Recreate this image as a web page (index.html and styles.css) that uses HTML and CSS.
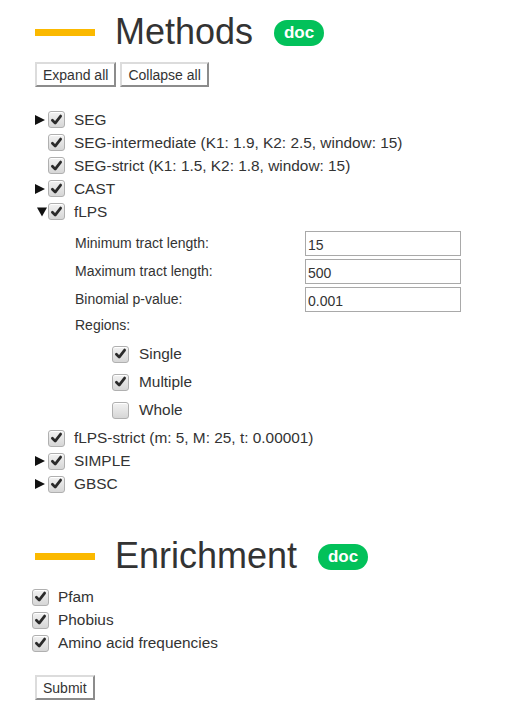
FILE: index.html
```html
<!DOCTYPE html>
<html lang="en">
<head>
<meta charset="utf-8">
<title>Methods</title>
<link rel="stylesheet" href="styles.css">
</head>
<body>
<main class="page">
  <section class="section">
    <h2 class="heading"><span class="bar"></span><span class="title">Methods</span><a class="doc">doc</a></h2>
    <div class="toolbar">
      <button class="btn" type="button">Expand all</button>
      <button class="btn" type="button">Collapse all</button>
    </div>

    <ul class="tree">
      <li class="row">
        <span class="toggle"><svg width="10" height="10" viewBox="0 0 10 10"><polygon points="0,0 10,5 0,10" fill="#111"/></svg></span>
        <span class="cb on"><svg width="16" height="16" viewBox="0 0 16 16"><path d="M3.6 8.2 L6.6 11.3 L12.4 3.8" fill="none" stroke="#2a2a2a" stroke-width="2.9" stroke-linecap="round" stroke-linejoin="round"/></svg></span>
        <span class="label">SEG</span>
      </li>
      <li class="row">
        <span class="toggle"></span>
        <span class="cb on"><svg width="16" height="16" viewBox="0 0 16 16"><path d="M3.6 8.2 L6.6 11.3 L12.4 3.8" fill="none" stroke="#2a2a2a" stroke-width="2.9" stroke-linecap="round" stroke-linejoin="round"/></svg></span>
        <span class="label">SEG-intermediate (K1: 1.9, K2: 2.5, window: 15)</span>
      </li>
      <li class="row">
        <span class="toggle"></span>
        <span class="cb on"><svg width="16" height="16" viewBox="0 0 16 16"><path d="M3.6 8.2 L6.6 11.3 L12.4 3.8" fill="none" stroke="#2a2a2a" stroke-width="2.9" stroke-linecap="round" stroke-linejoin="round"/></svg></span>
        <span class="label">SEG-strict (K1: 1.5, K2: 1.8, window: 15)</span>
      </li>
      <li class="row">
        <span class="toggle"><svg width="10" height="10" viewBox="0 0 10 10"><polygon points="0,0 10,5 0,10" fill="#111"/></svg></span>
        <span class="cb on"><svg width="16" height="16" viewBox="0 0 16 16"><path d="M3.6 8.2 L6.6 11.3 L12.4 3.8" fill="none" stroke="#2a2a2a" stroke-width="2.9" stroke-linecap="round" stroke-linejoin="round"/></svg></span>
        <span class="label">CAST</span>
      </li>
      <li class="row">
        <span class="toggle open"><svg width="10" height="10" viewBox="0 0 10 10"><polygon points="0,0.5 10,0.5 5,9.5" fill="#111"/></svg></span>
        <span class="cb on"><svg width="16" height="16" viewBox="0 0 16 16"><path d="M3.6 8.2 L6.6 11.3 L12.4 3.8" fill="none" stroke="#2a2a2a" stroke-width="2.9" stroke-linecap="round" stroke-linejoin="round"/></svg></span>
        <span class="label">fLPS</span>
      </li>
      <li class="panel">
        <div class="params">
          <label class="plabel" for="min">Minimum tract length:</label>
          <input class="pinput" id="min" type="text" value="15">
          <label class="plabel" for="max">Maximum tract length:</label>
          <input class="pinput" id="max" type="text" value="500">
          <label class="plabel" for="pval">Binomial p-value:</label>
          <input class="pinput" id="pval" type="text" value="0.001">
        </div>
        <div class="regions-title">Regions:</div>
        <ul class="regions">
          <li class="region">
            <span class="cb on"><svg width="16" height="16" viewBox="0 0 16 16"><path d="M3.6 8.2 L6.6 11.3 L12.4 3.8" fill="none" stroke="#2a2a2a" stroke-width="2.9" stroke-linecap="round" stroke-linejoin="round"/></svg></span>
            <span class="label">Single</span>
          </li>
          <li class="region">
            <span class="cb on"><svg width="16" height="16" viewBox="0 0 16 16"><path d="M3.6 8.2 L6.6 11.3 L12.4 3.8" fill="none" stroke="#2a2a2a" stroke-width="2.9" stroke-linecap="round" stroke-linejoin="round"/></svg></span>
            <span class="label">Multiple</span>
          </li>
          <li class="region">
            <span class="cb"></span>
            <span class="label">Whole</span>
          </li>
        </ul>
      </li>
      <li class="row">
        <span class="toggle"></span>
        <span class="cb on"><svg width="16" height="16" viewBox="0 0 16 16"><path d="M3.6 8.2 L6.6 11.3 L12.4 3.8" fill="none" stroke="#2a2a2a" stroke-width="2.9" stroke-linecap="round" stroke-linejoin="round"/></svg></span>
        <span class="label">fLPS-strict (m: 5, M: 25, t: 0.00001)</span>
      </li>
      <li class="row">
        <span class="toggle"><svg width="10" height="10" viewBox="0 0 10 10"><polygon points="0,0 10,5 0,10" fill="#111"/></svg></span>
        <span class="cb on"><svg width="16" height="16" viewBox="0 0 16 16"><path d="M3.6 8.2 L6.6 11.3 L12.4 3.8" fill="none" stroke="#2a2a2a" stroke-width="2.9" stroke-linecap="round" stroke-linejoin="round"/></svg></span>
        <span class="label">SIMPLE</span>
      </li>
      <li class="row">
        <span class="toggle"><svg width="10" height="10" viewBox="0 0 10 10"><polygon points="0,0 10,5 0,10" fill="#111"/></svg></span>
        <span class="cb on"><svg width="16" height="16" viewBox="0 0 16 16"><path d="M3.6 8.2 L6.6 11.3 L12.4 3.8" fill="none" stroke="#2a2a2a" stroke-width="2.9" stroke-linecap="round" stroke-linejoin="round"/></svg></span>
        <span class="label">GBSC</span>
      </li>
    </ul>
  </section>

  <section class="section enrich">
    <h2 class="heading"><span class="bar"></span><span class="title">Enrichment</span><a class="doc">doc</a></h2>
    <ul class="checks">
      <li class="check">
        <span class="cb on"><svg width="16" height="16" viewBox="0 0 16 16"><path d="M3.6 8.2 L6.6 11.3 L12.4 3.8" fill="none" stroke="#2a2a2a" stroke-width="2.9" stroke-linecap="round" stroke-linejoin="round"/></svg></span>
        <span class="label">Pfam</span>
      </li>
      <li class="check">
        <span class="cb on"><svg width="16" height="16" viewBox="0 0 16 16"><path d="M3.6 8.2 L6.6 11.3 L12.4 3.8" fill="none" stroke="#2a2a2a" stroke-width="2.9" stroke-linecap="round" stroke-linejoin="round"/></svg></span>
        <span class="label">Phobius</span>
      </li>
      <li class="check">
        <span class="cb on"><svg width="16" height="16" viewBox="0 0 16 16"><path d="M3.6 8.2 L6.6 11.3 L12.4 3.8" fill="none" stroke="#2a2a2a" stroke-width="2.9" stroke-linecap="round" stroke-linejoin="round"/></svg></span>
        <span class="label">Amino acid frequencies</span>
      </li>
    </ul>
    <button class="btn submit" type="submit">Submit</button>
  </section>
</main>
</body>
</html>
```

FILE: styles.css
```css
* { box-sizing: border-box; }

html, body {
  margin: 0;
  padding: 0;
  background: #ffffff;
}

body {
  font-family: "Liberation Sans", Arial, sans-serif;
  color: #333333;
}

.page {
  padding: 14px 0 0 35px;
}

ul { list-style: none; margin: 0; padding: 0; }

.heading {
  display: flex;
  align-items: center;
  height: 36px;
  margin: 0;
  font-weight: normal;
}

.bar {
  width: 60px;
  height: 7px;
  background: #fbb900;
  flex: none;
}

.title {
  font-size: 36px;
  line-height: 36px;
  color: #333333;
  margin-left: 20px;
}

.doc {
  margin-left: 21px;
  width: 50px;
  height: 26px;
  border-radius: 13px;
  background: #02c15a;
  color: #ffffff;
  font-weight: bold;
  font-size: 17px;
  line-height: 26px;
  text-align: center;
  margin-top: 2px;
}

.toolbar {
  display: flex;
  gap: 4px;
  margin-top: 12px;
}

.btn {
  height: 25px;
  padding: 0 6px;
  font-family: "Liberation Sans", Arial, sans-serif;
  font-size: 14px;
  color: #333333;
  background: #ffffff;
  border-style: solid;
  border-width: 2px;
  border-color: #dcdcdc #8c8c8c #8c8c8c #dcdcdc;
  border-radius: 0;
}

.tree {
  margin-top: 21px;
  font-size: 15.4px;
}

.row, .check {
  display: flex;
  align-items: center;
  height: 23px;
}

.toggle {
  width: 13px;
  flex: none;
  display: flex;
  align-items: center;
}

.toggle svg { display: block; }
.toggle.open svg { margin-left: 2px; }

.cb {
  width: 17px;
  height: 17px;
  flex: none;
  border: 1px solid #b0b0b0;
  border-radius: 3px;
  background: linear-gradient(#f2f2f2, #d6d6d6);
  box-shadow: inset 0 1px 0 #ffffff;
  display: flex;
  align-items: center;
  justify-content: center;
}

.cb svg { display: block; }

.label {
  margin-left: 9px;
  white-space: nowrap;
}

.panel {
  padding-left: 40px;
  padding-top: 8px;
  padding-bottom: 2.5px;
}

.params {
  display: grid;
  grid-template-columns: 230px 156px;
  grid-auto-rows: 25px;
  row-gap: 3px;
  align-items: center;
}

.plabel {
  font-size: 14px;
  line-height: 25px;
  color: #333333;
}

.pinput {
  width: 156px;
  height: 25px;
  border: 1px solid #a9a9a9;
  padding: 2px 2px 0;
  font-family: "Liberation Sans", Arial, sans-serif;
  font-size: 14px;
  color: #333333;
  background: #ffffff;
}

.regions-title {
  margin-top: 3px;
  font-size: 14px;
  line-height: 20px;
}

.regions {
  margin-top: 5px;
  padding-left: 37px;
}

.region {
  display: flex;
  align-items: center;
  height: 28px;
}

.region .label { margin-left: 10px; }

.enrich {
  margin-top: 42.5px;
}

.checks {
  margin-top: 11.5px;
  margin-left: -3px;
  font-size: 15.4px;
}

.check .label { margin-left: 9px; }

.submit {
  margin-top: 20.5px;
}
```
